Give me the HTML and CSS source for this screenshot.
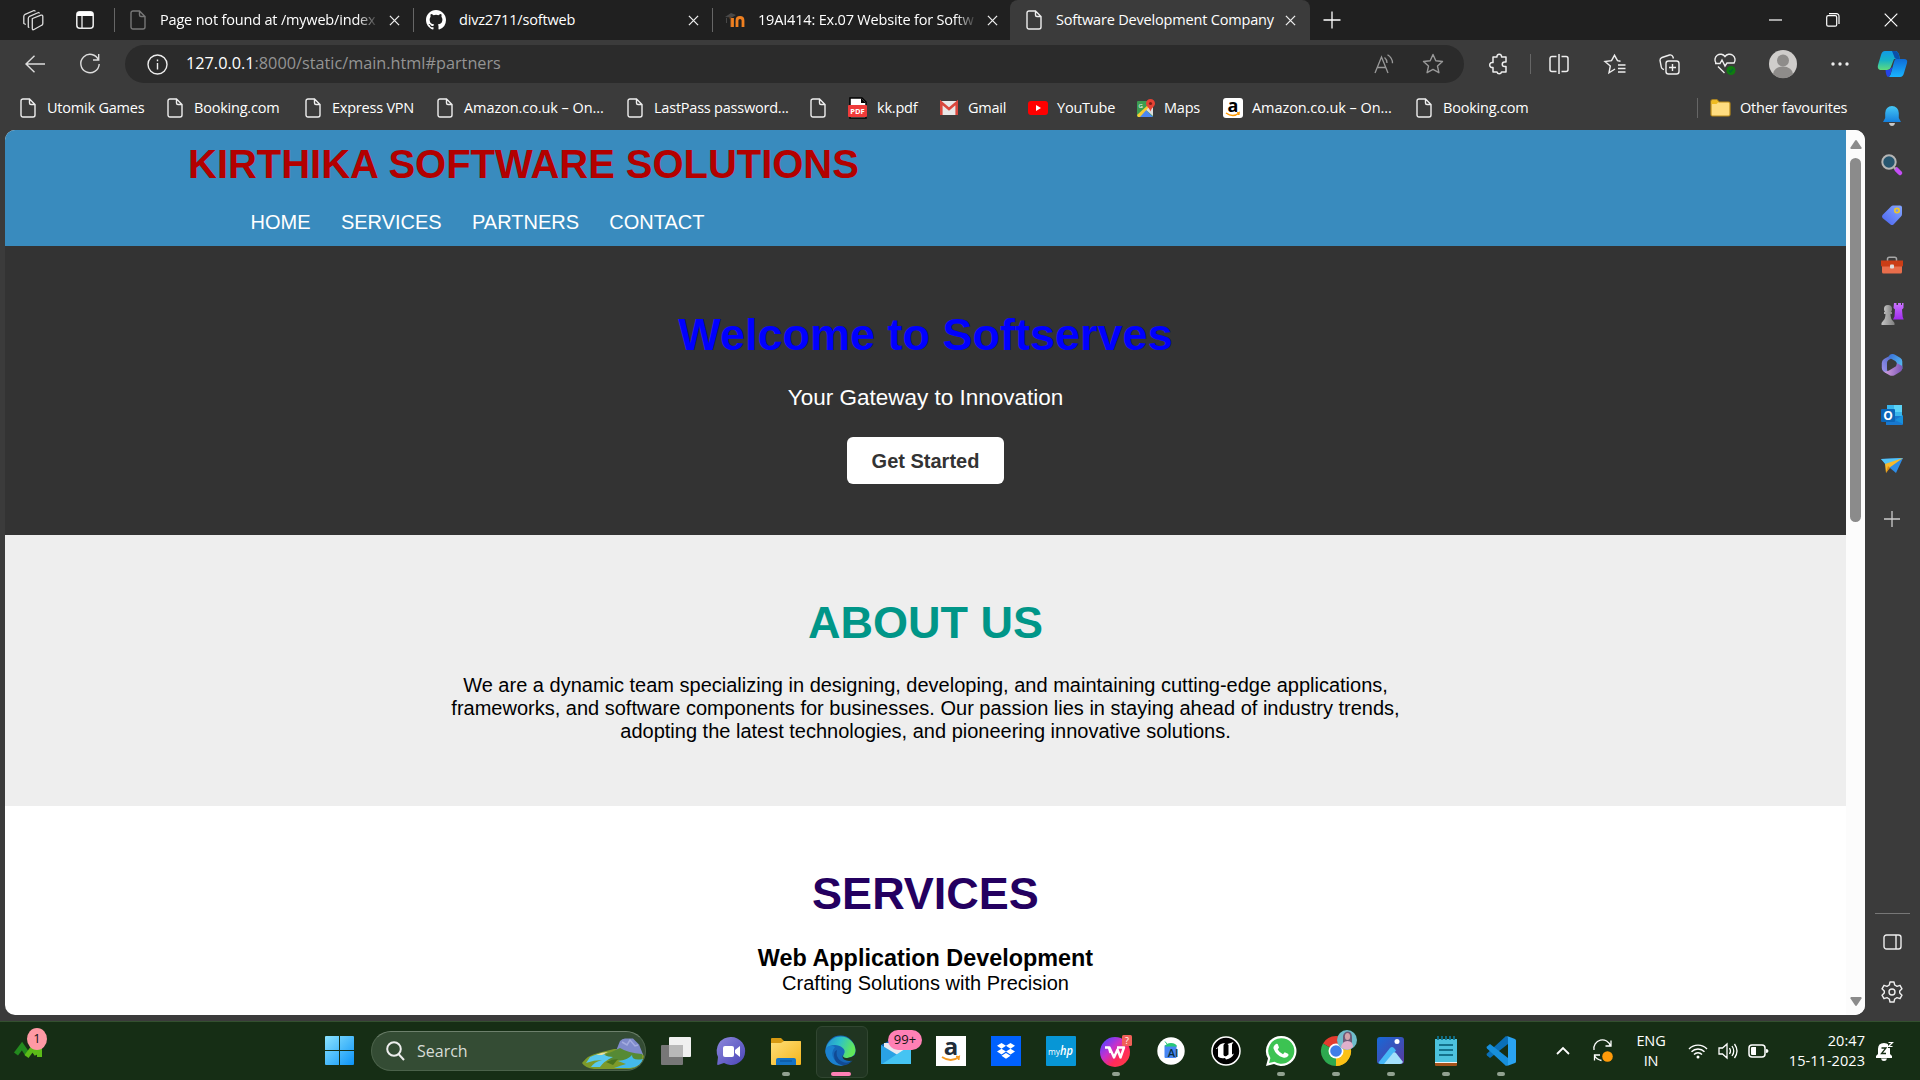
FILE: index.html
```html
<!DOCTYPE html>
<html lang="en">
<head>
<meta charset="utf-8">
<title>Software Development Company</title>
<link rel="stylesheet" href="styles.css">
</head>
<body>
<svg class="defs" width="0" height="0">
  <defs>
    <symbol id="doc" viewBox="0 0 16 20"><path d="M3 1h6.500L15 6.500V17a2 2 0 0 1-2 2H3a2 2 0 0 1-2-2V3a2 2 0 0 1 2-2zM9.500 1v4a1.500 1.500 0 0 0 1.500 1.500h4" fill="none" stroke="currentColor" stroke-width="1.400"/></symbol>
    <symbol id="x" viewBox="0 0 12 12"><path d="M1 1l10 10M11 1L1 11" fill="none" stroke="currentColor" stroke-width="1.400"/></symbol>
    <linearGradient id="win" x1="0" y1="0" x2="1" y2="1"><stop offset="0" stop-color="#8be3ff"/><stop offset="1" stop-color="#0c94f7"/></linearGradient>
    <linearGradient id="cyan" x1="0" y1="0" x2="0" y2="1"><stop offset="0" stop-color="#45c7f5"/><stop offset="1" stop-color="#1580dd"/></linearGradient>
    <linearGradient id="edgeA" x1="0" y1="0" x2="1" y2="0.300"><stop offset="0" stop-color="#2389d8"/><stop offset=".5" stop-color="#2ec2c8"/><stop offset="1" stop-color="#62e85a"/></linearGradient>
    <linearGradient id="cop1" x1="0" y1="0" x2="0" y2="1"><stop offset="0" stop-color="#109be8"/><stop offset=".5" stop-color="#18b3c4"/><stop offset="1" stop-color="#60dc7c"/></linearGradient>
    <linearGradient id="cop2" x1="0" y1="0" x2="0" y2="1"><stop offset="0" stop-color="#0f6bd6"/><stop offset="1" stop-color="#19b4ff"/></linearGradient>
    <linearGradient id="tag" x1="0" y1="1" x2="1" y2="0"><stop offset="0" stop-color="#4a63ee"/><stop offset="1" stop-color="#84a6ff"/></linearGradient>
    <linearGradient id="pawn" x1="0" y1="0" x2="1" y2="0"><stop offset="0" stop-color="#c4c4c4"/><stop offset="1" stop-color="#808080"/></linearGradient>
    <linearGradient id="rook" x1="0" y1="0" x2="0" y2="1"><stop offset="0" stop-color="#c974ff"/><stop offset="1" stop-color="#a02bee"/></linearGradient>
    <linearGradient id="fold" x1="0" y1="0" x2="1" y2="1"><stop offset="0" stop-color="#ffdf78"/><stop offset="1" stop-color="#f5b51c"/></linearGradient>
    <linearGradient id="wps" x1="0" y1="0" x2="1" y2="1"><stop offset="0.100" stop-color="#5a42ff"/><stop offset=".4" stop-color="#c730cc"/><stop offset=".65" stop-color="#ff2a5b"/><stop offset="1" stop-color="#ff4040"/></linearGradient>
    <linearGradient id="photo" x1="0" y1="0" x2="1" y2="1"><stop offset="0" stop-color="#1769d8"/><stop offset="1" stop-color="#5a3a9c"/></linearGradient>
    <linearGradient id="chat" x1="0" y1="0" x2="1" y2="1"><stop offset="0" stop-color="#8d88dc"/><stop offset="1" stop-color="#4a45b8"/></linearGradient>
    <linearGradient id="m1" x1="1" y1="0" x2="0" y2="1"><stop offset="0" stop-color="#3b62c8"/><stop offset="1" stop-color="#a795ec"/></linearGradient>
    <linearGradient id="m2" x1="0" y1="0" x2="1" y2="1"><stop offset="0" stop-color="#3a6fd8"/><stop offset="1" stop-color="#59c6f5"/></linearGradient>
    <linearGradient id="m3" x1="0" y1="0" x2="1" y2="0"><stop offset="0" stop-color="#d9a5e0"/><stop offset="1" stop-color="#7a55b8"/></linearGradient>
  </defs>
</svg>

<div class="screen">
<header class="tabstrip">
  <div class="tab-tools">
    <svg width="22" height="22" viewBox="0 0 22 22" fill="none" stroke="#ddd" stroke-width="1.300" stroke-linejoin="round"><path d="M10.500 9.500l8.500-3.300q1.800-.6 1.800 1.200v7q0 1.300-1.200 1.900L12 20.500q-1.700.8-1.700-1V9.700z"/><path d="M7.300 18.500l-1-.4V9.500q0-1.500 1.300-2.200L16.500 3.500l1.200.7M3.800 15.500l-2-1V7.500q0-1.500 1.300-2.200L12 1.500l1.500.8"/></svg>
    <svg width="18" height="18" viewBox="0 0 18 18"><rect x=".8" y=".8" width="16.400" height="16.400" rx="3" fill="none" stroke="#eee" stroke-width="1.500"/><path d="M1 5V3q0-2 2-2h12q2 0 2 2v2z" fill="#fff"/><path d="M6 5v12" stroke="#eee" stroke-width="1.300"/></svg>
  </div>
  <div class="tab t1"><svg class="doc dim"><use href="#doc"/></svg><span class="tt fade">Page not found at /myweb/index</span><svg class="x"><use href="#x"/></svg></div>
  <div class="tab t2"><svg width="20" height="20" viewBox="0 0 16 16"><path fill="#fff" d="M8 0C3.580 0 0 3.580 0 8c0 3.540 2.290 6.530 5.470 7.590.4.070.55-.17.55-.38 0-.19-.01-.82-.01-1.490-2.010.37-2.530-.49-2.690-.94-.09-.23-.48-.94-.82-1.130-.28-.15-.68-.52-.01-.53.63-.01 1.080.58 1.230.82.72 1.210 1.870.87 2.330.66.070-.52.28-.87.51-1.070-1.780-.2-3.640-.89-3.640-3.950 0-.87.31-1.590.82-2.150-.08-.2-.36-1.020.08-2.120 0 0 .67-.21 2.200.82a7.600 7.600 0 0 1 4 0c1.530-1.040 2.200-.82 2.200-.82.44 1.100.16 1.920.08 2.120.51.56.82 1.270.82 2.150 0 3.070-1.870 3.750-3.650 3.950.29.25.54.73.54 1.480 0 1.070-.01 1.930-.01 2.200 0 .21.15.46.55.38A8 8 0 0 0 16 8c0-4.420-3.580-8-8-8z"/></svg><span class="tt">divz2711/softweb</span><svg class="x"><use href="#x"/></svg></div>
  <div class="tab t3"><svg width="20" height="16" viewBox="0 0 20 16"><path d="M0 5L6 1l5 2-4 2.500z" fill="#484848"/><path d="M1.500 6v5" stroke="#484848"/><path d="M6 15V8q0-2.500-1.500-2.500" fill="none" stroke="#6b4526" stroke-width="2"/><path d="M7.500 15V6M12 15V8.500q0-3 3-3t3 3V15" fill="none" stroke="#f08020" stroke-width="2.800"/></svg><span class="tt fade">19AI414: Ex.07 Website for Softw</span><svg class="x"><use href="#x"/></svg></div>
  <div class="tab active"><svg class="doc"><use href="#doc"/></svg><span class="tt">Software Development Company</span><svg class="x"><use href="#x"/></svg></div>
  <svg class="newtab" width="18" height="18" viewBox="0 0 18 18"><path d="M9 .5v17M.5 9h17" stroke="#fff" stroke-width="1.300"/></svg>
  <div class="winbtns">
    <svg width="14" height="14" viewBox="0 0 14 14"><path d="M1 7h13" stroke="#fff" stroke-width="1.200"/></svg>
    <svg width="14" height="14" viewBox="0 0 14 14" fill="none" stroke="#fff" stroke-width="1.200"><rect x=".7" y="2.700" width="10" height="10.500" rx="1.500"/><path d="M3 .7h7.500a2.500 2.500 0 0 1 2.500 2.500V11"/></svg>
    <svg width="14" height="14" viewBox="0 0 14 14"><path d="M.7.7l12.600 12.600M13.300.7L.7 13.300" stroke="#fff" stroke-width="1.200"/></svg>
  </div>
</header>

<div class="toolbar">
  <svg class="back" width="20" height="18" viewBox="0 0 20 18" fill="none" stroke="#ddd" stroke-width="1.400"><path d="M20 9H1M9.500.7L1 9l8.500 8.300"/></svg>
  <svg class="reload" width="20" height="20" viewBox="0 0 20 20" fill="none" stroke="#ddd" stroke-width="1.400"><path d="M18.500 6A9.200 9.200 0 1 0 19.200 10M18.700 0v6H13"/></svg>
  <div class="address">
    <svg width="21" height="21" viewBox="0 0 21 21" fill="none" stroke="#eee" stroke-width="1.400"><circle cx="10.500" cy="10.500" r="9.500"/><path d="M10.500 9v6.500M10.500 5.500v1.800"/></svg>
    <span class="url"><b>127.0.0.1</b>:8000/static/main.html#partners</span>
    <div class="addr-icons">
      <svg width="20" height="20" viewBox="0 0 20 20" fill="none" stroke="#999" stroke-width="1.300"><path d="M1 19L7.500 3 14 19M3.500 13.500h8M10.500 3.500q2.500 2 2.500 5.500M13.500.8q5 3 5 8.500"/></svg>
      <svg width="22" height="22" viewBox="0 0 22 22"><path d="M11 1.500l2.800 6.200 6.700.8-5 4.600 1.400 6.600L11 16.400l-5.900 3.300 1.400-6.600-5-4.600 6.700-.8z" fill="none" stroke="#999" stroke-width="1.400" stroke-linejoin="round"/></svg>
    </div>
  </div>
  <div class="actions">
    <svg class="a1" width="22" height="22" viewBox="0 0 22 22"><path d="M5 4h4a2.300 2.300 0 1 1 4.500 0H18v5h-1.500a2 2 0 0 0 0 4.500H18V19h-4.500a2.300 2.300 0 0 1-4.500 0H5v-4.500a2.600 2.600 0 1 1 0-5z" fill="none" stroke="#eee" stroke-width="1.500" stroke-linejoin="round"/></svg>
    <i class="vsep a2"></i>
    <svg class="a3" width="20" height="20" viewBox="0 0 20 20" fill="none" stroke="#eee" stroke-width="1.500"><path d="M7.500 2.500H3a2 2 0 0 0-2 2v11a2 2 0 0 0 2 2h4.500M12.500 2.500H17a2 2 0 0 1 2 2v11a2 2 0 0 1-2 2h-4.500M10 0v20"/></svg>
    <svg class="a4" width="22" height="20" viewBox="0 0 22 20" fill="none" stroke="#eee" stroke-width="1.400"><path d="M11 14.500l-6 3.800 1.300-6.800L1 7l6.500-.8L10.500.8l3 5.400 3 .5M14 10.500h7.500M14 14h7.500M14 17.500h7.500" transform="translate(0 .5)"/></svg>
    <svg class="a5" width="21" height="21" viewBox="0 0 21 21" fill="none" stroke="#eee" stroke-width="1.400"><rect x="7" y="7" width="13" height="13" rx="2.500"/><path d="M13.500 10v7M10 13.500h7M5 15.500l-1-.4a3 3 0 0 1-1.700-2L1 6.500a3 3 0 0 1 2-3L10.500 1a3 3 0 0 1 3.500 2l.4 1.500"/></svg>
    <svg class="a6" width="22" height="22" viewBox="0 0 22 22" fill="none" stroke="#eee" stroke-width="1.400"><path d="M2 10a5 5 0 0 1 9-6.500A5 5 0 0 1 20 10M1 10.500h5l2-3.500 3 6 2-3h7.500M4 13.500L10.500 20"/><circle cx="17" cy="17.500" r="4.500" fill="#107c10" stroke="none"/><path d="M15 17.500l1.500 1.500 2.500-3" stroke="#063"/></svg>
    <svg class="a7" width="28" height="28" viewBox="0 0 28 28"><circle cx="14" cy="14" r="14" fill="#cfcdcb"/><circle cx="14" cy="10.500" r="6" fill="#8e8c8a"/><path d="M4 24a10 7.500 0 0 1 20 0 14 14 0 0 1-20 0z" fill="#8e8c8a"/></svg>
    <svg class="a8" width="18" height="4" viewBox="0 0 18 4" fill="#eee"><circle cx="2" cy="2" r="1.700"/><circle cx="9" cy="2" r="1.700"/><circle cx="16" cy="2" r="1.700"/></svg>
    <svg class="a9" width="31" height="28" viewBox="0 0 31 28"><path d="M8 1h10q3 0 4 4l1 4h-6l-3.500 9q-1 2-3.500 2H3q-3-1-2-5L4 5q1-4 4-4z" fill="url(#cop1)"/><path d="M15 1h3q3 0 4 4l1 4h-3q-2.500 0-3-3z" fill="#0b4fa8"/><path d="M19 9h8q4 0 3 4l-3 10q-1 4-4 4H11q2 0 3-4l3-11q.6-3 2-3z" fill="url(#cop2)"/><path d="M8.500 20h2q2.500 0 3.500-2l1.500-1-2 7q-1 3-2.500 3-2-1-2.500-7z" fill="#2444e8"/></svg>
  </div>
</div>

<nav class="bookmarks">
  <div class="bm b1"><svg class="doc"><use href="#doc"/></svg><span>Utomik Games</span></div>
  <div class="bm b2"><svg class="doc"><use href="#doc"/></svg><span>Booking.com</span></div>
  <div class="bm b3"><svg class="doc"><use href="#doc"/></svg><span>Express VPN</span></div>
  <div class="bm b4"><svg class="doc"><use href="#doc"/></svg><span class="wide">Amazon.co.uk – On...</span></div>
  <div class="bm b5"><svg class="doc"><use href="#doc"/></svg><span>LastPass password...</span></div>
  <div class="bm b6"><svg class="doc"><use href="#doc"/></svg></div>
  <div class="bm b7"><svg width="20" height="20" viewBox="0 0 20 20"><path d="M2 0h12l4 4v16H2z" fill="#fff" stroke="#000" stroke-width="1.500"/><path d="M13 0l5 5h-5z" fill="#000"/><rect y="7" width="19" height="12" rx="1" fill="#f03a3a"/><text x="9.500" y="15.500" font-size="7.500" font-weight="bold" fill="#fff" text-anchor="middle">PDF</text></svg><span>kk.pdf</span></div>
  <div class="bm b8"><svg width="18" height="14" viewBox="0 0 18 14"><rect width="18" height="14" rx="1" fill="#e8e8e8"/><path d="M1.300 14V1.500L9 8l7.700-6.500V14" fill="none" stroke="#d9473d" stroke-width="2.600"/></svg><span>Gmail</span></div>
  <div class="bm b9"><svg width="20" height="14" viewBox="0 0 20 14"><rect width="20" height="14" rx="3" fill="#f00"/><path d="M8 4l5 3-5 3z" fill="#fff"/></svg><span>YouTube</span></div>
  <div class="bm b10"><svg width="18" height="18" viewBox="0 0 18 18"><rect y="2" width="16" height="16" rx="1" fill="#3c9c50"/><path d="M1 18l7-8 8 8z" fill="#4b87f3"/><path d="M8 10l5-5 3 3v9z" fill="#dedede"/><path d="M0 16L11 6l1 2L3 18H1z" fill="#f6cc35"/><path d="M9 4.500a4.500 4.500 0 0 1 9 0c0 3-3.500 4-4.500 8-1-4-4.500-5-4.500-8z" fill="#e64234"/><circle cx="13.500" cy="4.500" r="1.600" fill="#7c1e18"/><text x="1.500" y="8.500" font-size="6" fill="#fff">G</text></svg><span>Maps</span></div>
  <div class="bm b11"><svg width="20" height="20" viewBox="0 0 20 20"><rect width="20" height="20" rx="3" fill="#fff"/><text x="10" y="13.500" font-size="18" font-weight="bold" text-anchor="middle">a</text><path d="M3 15q7 5 13 0l-.2 2M16 15l-2-.3" fill="none" stroke="#f90" stroke-width="1.500"/></svg><span class="wide">Amazon.co.uk – On...</span></div>
  <div class="bm b12"><svg class="doc"><use href="#doc"/></svg><span>Booking.com</span></div>
  <i class="vsep"></i>
  <div class="bm other"><svg width="21" height="18" viewBox="0 0 21 18"><path d="M1 4.500V2.500q0-1.700 1.500-1.700H7l2 2.200h9.500q1.500 0 1.500 1.500v11q0 1.500-1.500 1.500h-16Q1 17 1 15.500z" fill="#ffdd80" stroke="#b98a18" stroke-width="1.200"/><path d="M1.500 5V2.700q0-1.400 1.300-1.400H6.700L8.500 3 6.500 5z" fill="#f0bb20"/></svg><span>Other favourites</span></div>
</nav>

<div class="body">
  <div class="viewport">
    <main class="page">
      <div class="site-header"><div class="container">
        <h1>KIRTHIKA SOFTWARE SOLUTIONS</h1>
        <ul><li>HOME</li><li>SERVICES</li><li>PARTNERS</li><li>CONTACT</li></ul>
      </div></div>
      <section class="hero"><h2>Welcome to Softserves</h2><p>Your Gateway to Innovation</p><a class="btn">Get Started</a></section>
      <section class="about"><h2>ABOUT US</h2><p>We are a dynamic team specializing in designing, developing, and maintaining cutting-edge applications, frameworks, and software components for businesses. Our passion lies in staying ahead of industry trends, adopting the latest technologies, and pioneering innovative solutions.</p></section>
      <section class="services"><h2>SERVICES</h2><h3>Web Application Development</h3><p>Crafting Solutions with Precision</p></section>
    </main>
    <div class="scroll">
      <svg width="12" height="9" viewBox="0 0 12 9"><path d="M6 0q.5 0 1 .7L11.500 7.500q.5 1.500-.7 1.500H1.200Q0 9 .5 7.500L5 .7Q5.500 0 6 0z" fill="#8b8b8b"/></svg>
      <div class="thumb"></div>
      <svg class="down" width="12" height="9" viewBox="0 0 12 9"><path d="M6 9q-.5 0-1-.7L.5 1.500Q0 0 1.200 0h9.600q1.200 0 .7 1.500L7 8.300Q6.500 9 6 9z" fill="#8b8b8b"/></svg>
    </div>
  </div>
  <aside class="sidebar">
    <svg class="s1" width="20" height="22" viewBox="0 0 20 22"><path d="M7 18h6q-.5 3-3 3t-3-3z" fill="#c8c8c8"/><path d="M10 1a6.800 6.800 0 0 1 6.800 7v5l2.200 4H1l2.200-4V8A6.800 6.800 0 0 1 10 1z" fill="url(#cyan)"/></svg>
    <svg class="s2" width="22" height="22" viewBox="0 0 22 22"><path d="M15.500 15.500l3.500 3.500" stroke="#c44df5" stroke-width="4.500" stroke-linecap="round"/><circle cx="8" cy="8" r="6.700" fill="#27566f" stroke="#b5b5b5" stroke-width="2"/><path d="M12.500 13l2 2" stroke="#aaa" stroke-width="2"/></svg>
    <svg class="s3" width="22" height="22" viewBox="0 0 22 22"><path d="M12 1.500h7q2 0 2 2V10q0 1.500-1 2.500l-7.500 8q-1.500 1-3 0L1.500 14q-1-1.500 0-3L10 2.500q1-1 2-1z" fill="url(#tag)"/><circle cx="16" cy="6.500" r="2.200" fill="none" stroke="#ecc52a" stroke-width="1.700"/></svg>
    <svg class="s4" width="24" height="20" viewBox="0 0 24 20"><path d="M7.500 6V4q0-1.800 1.800-1.800h5.400q1.800 0 1.800 1.800v2" fill="none" stroke="#a7a7a7" stroke-width="1.500"/><path d="M2 9h20v8q0 1.500-1.500 1.500h-17Q2 18.500 2 17z" fill="#e86d4b"/><path d="M1 5.500h22v5q0 1-1 1H2q-1 0-1-1z" fill="#cb3d16"/><rect x="10" y="9.500" width="4" height="4" rx="1" fill="#ddd"/></svg>
    <svg class="s5" width="24" height="24" viewBox="0 0 24 24"><path d="M14 1h2.500v2H18V1h3v2h1V1h1.500v5l-1.500 1.500.7 7.500 1 2.500H13l1.500-3 .5-7L13.500 6z" fill="url(#rook)"/><circle cx="8" cy="7" r="4" fill="url(#pawn)"/><path d="M4 10h8v2h-1.500q0 5 2.500 7l1.500 2v2H1.500v-2L3 19q2.500-2 2.500-7H4z" fill="url(#pawn)"/></svg>
    <svg class="s6" width="22" height="22" viewBox="0 0 22 22"><path d="M12 0L3 5Q.8 6.300.8 9v5q0 2.500 2 3.700L7 20l-1-5V9q0-2 1.500-3L13 3z" fill="url(#m1)"/><path d="M8.500 1q3-1.800 6 0l5 3q1.800 1.200 1.800 3.500V15l-5.500-3.500V9.500q0-1.500-1.500-2.500L8 3.500z" fill="url(#m2)"/><path d="M21.300 12v2.500q0 2-2 3.200l-5.800 3.500q-2.500 1.300-5 0l-6-3.700q3 .5 5.500-1l7-4.200 1.200-3z" fill="url(#m3)"/></svg>
    <svg class="s7" width="22" height="22" viewBox="0 0 22 22"><path d="M6 1h14q1 0 1 1v18q0 1-1 1H6z" fill="#38b5ec"/><path d="M13 1h8v7h-8z" fill="#5bd3f7"/><path d="M5 12h17v8q0 1-1 1H5z" fill="#1878cf"/><path d="M22 11v9l-8-4z" fill="#1690dc"/><rect y="5" width="14" height="13" rx="1" fill="#0b66b8"/><text x="7" y="15.500" font-size="12" font-weight="bold" fill="#fff" text-anchor="middle">O</text></svg>
    <svg class="s8" width="22" height="18" viewBox="0 0 22 18"><path d="M0 3L22 2 15 17 9 12z" fill="#2e8de8"/><path d="M0 3L22 2 5 9z" fill="#54c4f8"/><path d="M22 2L4 8l1 9 3-5z" fill="#f7ba2c"/><path d="M5 17l4-5-2-2z" fill="#d98a15"/></svg>
    <svg class="s9" width="16" height="16" viewBox="0 0 16 16"><path d="M8 0v16M0 8h16" stroke="#ccc" stroke-width="1.300"/></svg>
    <i class="hsep"></i>
    <svg class="s10" width="19" height="16" viewBox="0 0 19 16" fill="none" stroke="#eee" stroke-width="1.400"><rect x="1" y="1" width="17" height="14" rx="2.500"/><path d="M13 1v14"/></svg>
    <svg class="s11" width="22" height="22" viewBox="0 0 22 22" fill="none" stroke="#eee" stroke-width="1.400" stroke-linejoin="round"><path d="M9 1h4l.7 3 2.300 1.300 3-1 2 3.500L18.700 10v2l2.300 2.200-2 3.500-3-1-2.300 1.300L13 21H9l-.7-3L6 16.700l-3 1-2-3.500L3.300 12v-2L1 7.800l2-3.500 3 1L8.300 4z"/><circle cx="11" cy="11" r="3"/></svg>
  </aside>
</div>

<footer class="taskbar">
  <div class="widget"><svg width="30" height="22" viewBox="0 0 30 22"><path d="M2 14l6-8 6 9" fill="none" stroke="#238a1e" stroke-width="5"/><path d="M12.500 16.500l6-8 3 4 4-2V17" fill="none" stroke="#5cbc18" stroke-width="5"/></svg><span class="count">1</span></div>
  <svg class="start" width="29" height="29" viewBox="0 0 29 29" fill="url(#win)"><path d="M1 0h13v14H0V1q0-1 1-1zM15 0h13q1 0 1 1v13H15zM0 15h14v14H1q-1 0-1-1zM15 15h14v13q0 1-1 1H15z"/></svg>
  <div class="search"><svg width="19" height="20" viewBox="0 0 19 20" fill="none" stroke="#eee" stroke-width="2"><circle cx="8" cy="8" r="6.800"/><path d="M12.500 13l5.500 6"/></svg><span>Search</span>
    <svg class="scene" width="62" height="32" viewBox="0 0 62 32"><path d="M0 25Q6 17 16 15L32 11h22q8 4 8 8-2 12-15 12H12Q3 30 0 25z" fill="#7d9a2a"/><path d="M34 13l4-10q2-2.500 5-2.500h8l6 6 4 10-10 3H34z" fill="#7f8bcb"/><path d="M40 4l5 3 3-5 5 6 3-1" fill="none" stroke="#a3abdf" stroke-width="1.500"/><path d="M24 16q6-2 14-6 8 5 22 6v6H24z" fill="#568a35"/><path d="M8 19q9-4 15-4-3 3 8 4-9 4-13 10H9q3-5 11-7-8 0-16 3z" fill="#58c8ee"/><path d="M36 23q10-1 14-6 0 6 11 4-2 8-13 9H32q8-3 12-4z" fill="#44b9ea"/><path d="M14 17q6-3 12-3l-6 3z" fill="#f0e09a"/><path d="M24 24q6-3 12-3l-5 6z" fill="#49751f"/></svg>
  </div>
  <div class="apps">
    <div class="app"><svg width="30" height="30" viewBox="0 0 30 30"><rect x="8" y="1" width="22" height="20" rx="1" fill="#f0f0f0"/><rect y="9" width="22" height="20" rx="1" fill="#777" /><rect x="8" y="9" width="14" height="12" fill="#b8b8b8"/></svg></div>
    <div class="app"><svg width="30" height="30" viewBox="0 0 30 30"><path d="M15 1a14 14 0 1 1-7 26l-6 2q-1 0-.8-1L2 21A14 14 0 0 1 15 1z" fill="url(#chat)"/><rect x="7" y="10" width="11" height="11" rx="2" fill="#fff"/><path d="M19 14l5-4v11l-5-4z" fill="#fff"/></svg></div>
    <div class="app run"><svg width="30" height="28" viewBox="0 0 30 28"><path d="M0 2q0-1 1-1h9l3 3h16q1 0 1 1v6H0z" fill="#d79a12"/><path d="M0 6h10l3-2h16q1 0 1 1v22q0 1-1 1H1q-1 0-1-1z" fill="url(#fold)"/><path d="M5 28v-5q0-2 2-2h16q2 0 2 2v5z" fill="#1373c6"/><path d="M9 24h12" stroke="#0b4f93"/></svg></div>
    <div class="app run on"><svg width="31" height="31" viewBox="0 0 31 31"><circle cx="15.500" cy="15.500" r="15" fill="#1667b8"/><path d="M.8 14A15 15 0 0 1 30.500 15c0 6-5 8-9 8s-4-2-2.500-4c3-5-4-9-9-9Q4 10 .8 14z" fill="url(#edgeA)"/><path d="M10 12q-5 6-1 12t10 6.500Q8 32 3 24-1 18 1 13q4-4 9-1z" fill="#1b81cf"/><path d="M12 15q-2 7 4 11t12-1q-4 5-10 5.500Q9 29 9 20q0-4 3-5z" fill="#114a94"/><path d="M19 19q-3 3 2 4 4 .6 9-3l2 4-3 1q-6 2-10-.500-3-3 0-5.500z" fill="#203521"/></svg></div>
    <div class="app"><svg width="30" height="27" viewBox="0 0 30 27"><path d="M0 8L15 0l15 8v19H0z" fill="#0e63b0"/><path d="M3 6h24v8L15 20 3 13z" fill="#e9e9f0"/><path d="M0 8l20 12-9 7H0z" fill="#2aa2e4"/><path d="M30 8v19H1z" fill="#45c4f3"/></svg><span class="badge">99+</span></div>
    <div class="app"><svg width="30" height="30" viewBox="0 0 30 30"><rect width="30" height="30" fill="#fff"/><text x="15" y="19" font-size="24" font-weight="bold" fill="#222d3a" text-anchor="middle">a</text><path d="M6 21q9 6 17 0l-.4 3M23 21l-3-.3" fill="none" stroke="#f59a20" stroke-width="1.800"/></svg></div>
    <div class="app"><svg width="30" height="30" viewBox="0 0 30 30"><rect width="30" height="30" fill="#0061fe"/><path d="M10.500 7l4.500 2.800-4.500 2.900L6 9.800zM19.500 7L24 9.800l-4.500 2.900L15 9.800zM10.500 12.700l4.500 2.800-4.500 2.900L6 15.500zM19.500 12.700l4.500 2.800-4.500 2.900-4.500-2.900zM15 17l4.500 2.800L15 22.700l-4.500-2.900z" fill="#fff"/></svg></div>
    <div class="app"><svg width="30" height="30" viewBox="0 0 30 30"><rect width="30" height="30" rx="1" fill="#0796d6"/><text x="2" y="18.500" font-size="9.500" fill="#fff" textLength="12" lengthAdjust="spacingAndGlyphs">my</text><text x="14" y="19" font-size="13" font-style="italic" font-weight="600" fill="#fff" textLength="13" lengthAdjust="spacingAndGlyphs">hp</text></svg></div>
    <div class="app run"><svg width="32" height="32" viewBox="0 0 32 32"><circle cx="15" cy="17" r="15" fill="url(#wps)"/><path d="M5 12.500h4.500l4.500 10 3.500-8 3 8L24 12.500h-7M9 13l1.500 5" fill="none" stroke="#fff" stroke-width="2.400" stroke-linejoin="round"/><rect x="22" width="10" height="11" rx="1.500" fill="#f06057"/><text x="27" y="9" font-size="9" fill="#fff" text-anchor="middle">?</text></svg></div>
    <div class="app"><svg width="28" height="28" viewBox="0 0 28 28"><circle cx="14" cy="14" r="13.700" fill="#fff"/><rect x="7.500" y="8" width="12" height="13" rx="1" fill="#4786f4"/><path d="M8 9.500q1-3.500 6-3.500t6 3.500z" fill="#28c878"/><path d="M8 4.500l2 2.500" stroke="#28c878"/><text x="16" y="20" font-size="11" font-weight="600" fill="#083042" text-anchor="middle">AI</text></svg></div>
    <div class="app"><svg width="30" height="30" viewBox="0 0 30 30"><circle cx="15" cy="15" r="14" fill="#000" stroke="#fff" stroke-width="1.500"/><path d="M6 13q2-6 8-6l-1.500 2v10q1 2 3 1l2-1.500V9l-1-1 6-2-1.500 2.500v10l2-1q-2 5-8 6l-1-1.500q-5 1-7-1.500V12q-1-1-2 1z" fill="#fff"/></svg></div>
    <div class="app run"><svg width="32" height="32" viewBox="0 0 32 32"><path d="M16 1a15 15 0 1 1-7 28l-8 2 2-7.500A15 15 0 0 1 16 1z" fill="#fff"/><path d="M16 3.200a12.800 12.800 0 1 1-6.500 23.500L4 28l1.400-5A12.800 12.800 0 0 1 16 3.200z" fill="#3cc352"/><path d="M11 9q1.500-.8 2 .8l1 2.700-1.300 2q2 3.500 5.300 4.800l1.700-2 3.300 1.500q1 .7.200 2.200-2 2.500-5.200 1.500-7-2-9.500-9Q8 11 11 9z" fill="#fff"/></svg></div>
    <div class="app run chrome"><svg width="30" height="30" viewBox="0 0 30 30"><path d="M15 15L2 7.500A15 15 0 0 1 28 7.500z" fill="#e33b2e"/><path d="M15 15L28 7.500A15 15 0 0 1 15 30z" fill="#fbc116"/><path d="M15 15v15A15 15 0 0 1 2 7.500z" fill="#2da94f"/><path d="M15 8.300h13.300A15 15 0 0 1 15 30l5.800-11.600z" fill="#fbc116"/><circle cx="15" cy="15" r="7.500" fill="#fff"/><circle cx="15" cy="15" r="5.800" fill="#3f7ee8"/></svg><svg class="face" width="20" height="20" viewBox="0 0 20 20"><circle cx="10" cy="10" r="10" fill="#6fbccb"/><path d="M6 17V6q1-4.500 5-4.500t4 6v10q-5 2-9-.500z" fill="#6d5a78"/><ellipse cx="10.500" cy="6.500" rx="2.600" ry="3.600" fill="#d3a3aa"/><path d="M4 17.500q1-6.500 6.500-6.500t5.500 6q-5 5-12 .5z" fill="#dfb0cc"/></svg></div>
    <div class="app run"><svg width="27" height="27" viewBox="0 0 27 27"><rect width="27" height="27" rx="3" fill="url(#photo)"/><circle cx="20" cy="4.500" r="2.500" fill="#fff"/><path d="M1.500 25.500L13 11q2-2 4 0l2 2.500L8 27H4q-2 0-2.500-1.500z" fill="#45b7f6"/><path d="M7 27l9-11q1.500-1.500 3 0l7 9q-1 2-3 2z" fill="#a3e0fb"/></svg></div>
    <div class="app run"><svg width="24" height="30" viewBox="0 0 24 30"><rect x="1" y="25" width="22" height="5" rx="1" fill="#a5531a"/><rect x="1" y="24" width="22" height="3" fill="#f2f2f2"/><path d="M1 3h22v23H1z" fill="#4cc2dd"/><path d="M4 0v4M8 0v4M12 0v4M16 0v4M20 0v4" stroke="#0f7390" stroke-width="1.800"/><path d="M5 9h14M5 14h14M5 19h14" stroke="#14728c" stroke-width="1.800"/></svg></div>
    <div class="app run"><svg width="30" height="30" viewBox="0 0 30 30"><path d="M22 8L4 22l-3-2.500q-1-1 0-2L20 0l2 1z" fill="#0a6fb8"/><path d="M22 22L4 8l-3 2.500q-1 1 0 2L20 30l2-1z" fill="#178fdc"/><path d="M21 0l8 3q1 .5 1 1.500v21q0 1-1 1.500l-8 3q1-1 1-2.500v-25Q22 1 21 0z" fill="#2aa3f2"/></svg></div>
  </div>
  <div class="tray">
    <svg class="chev" width="14" height="9" viewBox="0 0 14 9"><path d="M1 8l6-6 6 6" fill="none" stroke="#fff" stroke-width="1.800"/></svg>
    <svg class="sync" width="22" height="22" viewBox="0 0 22 22" fill="none" stroke="#fff" stroke-width="1.300"><path d="M2 10A8.500 8.500 0 0 1 18.500 6M19 .5V6h-5.500M2.500 20.500V15H8M2.500 15.500q2 4 7 5"/><circle cx="15.500" cy="16.500" r="5.300" fill="#ff9b0a" stroke="none"/></svg>
    <div class="lang">ENG<br>IN</div>
    <svg class="wifi" width="20" height="16" viewBox="0 0 20 16" fill="none" stroke="#fff" stroke-width="1.400"><path d="M1 6a12.500 12.500 0 0 1 18 0M3.500 8.800a9 9 0 0 1 13 0M6 11.500a5.500 5.500 0 0 1 8 0"/><circle cx="10" cy="14" r="1.500" fill="#fff" stroke="none"/></svg>
    <svg class="vol" width="20" height="18" viewBox="0 0 20 18" fill="none" stroke="#fff" stroke-width="1.300"><path d="M1 6h3.500L9 2v14l-4.500-4H1zM11.500 6q2 3 0 6M14 4q3.500 5 0 10M16.500 2q5 7 0 14"/></svg>
    <svg class="bat" width="21" height="14" viewBox="0 0 21 14"><rect x="1" y="1" width="16" height="12" rx="3" fill="none" stroke="#fff" stroke-width="1.500"/><path d="M3 4q0-1 1-1h4v8H4q-1 0-1-1zM18 5q2.500 0 2.500 2T18 9z" fill="#fff"/></svg>
    <div class="clock">20:47<br>15-11-2023</div>
    <svg class="bell" width="18" height="20" viewBox="0 0 18 20"><path d="M8 2q6 0 6 6v5l2 2v2H0v-2l2-2V8q0-6 6-6zM5 17.500h6q-.5 2.500-3 2.500t-3-2.500z" fill="#fff"/><path d="M5.500 7h4.500l-4.500 5.500H10" fill="none" stroke="#162e15" stroke-width="1.300"/><path d="M12 0h6v7h-6z" fill="#162e15"/><path d="M12.500 1.500h4l-4 4h4" fill="none" stroke="#fff" stroke-width="1.200"/></svg>
  </div>
</footer>
</div>
</body>
</html>
```
FILE: styles.css
```css
* { box-sizing: border-box; }
body { margin: 0; font-family: "Open Sans", "Noto Sans", sans-serif; color: #fff; background: #3b3b3b; overflow: hidden; }
svg { flex: none; display: block; overflow: visible; }
svg text { font-family: "Open Sans", sans-serif; letter-spacing: 0; }
.defs { position: absolute; }
.screen { width: 1920px; height: 1080px; display: grid; grid-template-rows: 40px 48px 42px 891px 59px; }
.doc { width: 16px; height: 20px; color: #eee; }
.dim { color: #777; }
.x { width: 11px; height: 11px; color: #eee; }

/* tabs */
.tabstrip { display: flex; align-items: center; background: #202020; font-size: 14.500px; letter-spacing: -0.180px; }
.tab-tools { width: 114px; padding-left: 22px; display: flex; align-items: center; gap: 32px; }
.tab { display: flex; align-items: center; height: 40px; }
.tab::before { content: ""; width: 1px; height: 24px; background: #666; margin-right: 15px; flex: none; }
.tt { white-space: nowrap; overflow: hidden; margin-left: 13px; padding-bottom: 2px; flex: none; }
.t1 { width: 299px; } .t1 .tt { width: 219px; margin-left: 14px; margin-right: 10px; }
.t2 { width: 299px; } .t2::before { margin-right: 12px; } .t2 .tt { width: 229px; }
.t3 { width: 298px; } .t3::before { margin-right: 12px; } .t3 .tt { width: 219px; margin-right: 10px; }
.fade { -webkit-mask-image: linear-gradient(90deg, #000 90%, transparent); mask-image: linear-gradient(90deg, #000 90%, transparent); }
.active { width: 300px; background: #3b3b3b; border-radius: 8px 8px 0 0; }
.active::before { background: none; }
.active .tt { width: 221px; margin-left: 14px; margin-right: 8px; }
.newtab { margin-left: 13px; }
.winbtns { margin-left: auto; margin-right: 22px; display: flex; gap: 44px; }

/* toolbar */
.toolbar { display: flex; align-items: center; }
.back { margin-left: 25px; }
.reload { margin-left: 35px; }
.address { margin-left: 25px; width: 1339px; height: 38px; border-radius: 19px; background: #2b2b2b; display: flex; align-items: center; padding: 0 20px 0 22px; }
.url { margin-left: 18px; font-size: 16.250px; color: #949494; white-space: nowrap; padding-bottom: 2px; }
.url b { color: #fff; font-weight: 400; }
.addr-icons { margin-left: auto; display: flex; align-items: center; gap: 28px; }
.actions { flex: 1; display: flex; align-items: center; }
.a1 { margin-left: 24px; } .a2 { margin-left: 20px; } .a3 { margin-left: 18px; } .a4 { margin-left: 35px; } .a5 { margin-left: 33px; }
.a6 { margin-left: 34px; } .a7 { margin-left: 33px; } .a8 { margin-left: 34px; } .a9 { margin-left: 28px; }
.vsep { width: 1px; height: 20px; background: #666; flex: none; }

/* favourites bar */
.bookmarks { display: flex; align-items: center; padding-left: 20px; font-size: 14.500px; letter-spacing: -0.220px; padding-bottom: 2px; }
.bm { display: flex; align-items: center; gap: 11px; white-space: nowrap; flex: none; }
.bm span { padding-bottom: 2px; }
.bm .wide { letter-spacing: -0.080px; }
.b1 { width: 147px; } .b2 { width: 138px; } .b3 { width: 132px; } .b4 { width: 190px; } .b5 { width: 183px; }
.b6 { width: 38px; } .b7 { width: 92px; gap: 9px; } .b8 { width: 88px; gap: 10px; } .b9 { width: 109px; gap: 9px; }
.b10 { width: 86px; gap: 9px; } .b11 { width: 193px; gap: 9px; } .b12 { width: 281px; }
.other { margin-left: 12px; gap: 9px; }

/* browser body */
.body { display: flex; }
.viewport { width: 1860px; height: 885px; margin-left: 5px; border-radius: 10px; overflow: hidden; display: flex; background: #fff; }
.page { width: 1841px; font-family: "Liberation Sans", Arial, sans-serif; font-size: 20px; line-height: 23px; color: #000; text-align: center; }
.page h1, .page h2, .page h3, .page p, .page ul { margin: 0; padding: 0; }
.site-header { height: 116px; background: #398bbe; text-align: left; }
.container { width: 80%; margin: 0 auto; padding-top: 11px; }
.page h1 { font-size: 40px; line-height: 46px; color: #b30000; letter-spacing: -0.040px; margin-left: -1px; }
.page ul { display: flex; gap: 30.300px; list-style: none; color: #fff; padding: 24px 0 0 61.500px; }
.page h2 { font-size: 45px; line-height: 52px; }
.hero { height: 289px; background: #333; color: #fff; padding-top: 63px; }
.hero h2 { color: #00f; }
.hero p { font-size: 22.500px; line-height: 28px; margin-top: 23px; }
.btn { display: inline-block; margin-top: 25px; width: 157px; height: 47px; line-height: 48px; border-radius: 6px; background: #fff; color: #333; font-weight: 700; }
.about { height: 271px; background: #eee; padding-top: 62px; }
.about h2 { color: #009688; }
.about p { width: 1000px; margin: 25px auto 0; }
.services { padding-top: 62px; }
.services h2 { color: #240060; }
.services h3 { font-size: 23.400px; line-height: 27px; margin-top: 25px; }
.services p { font-size: 20px; }
.scroll { width: 19px; background: #fcfcfc; display: flex; flex-direction: column; align-items: center; padding: 10px 0 9px; }
.thumb { width: 11px; height: 364px; margin-top: 9px; border-radius: 6px; background: #8b8b8b; }
.down { margin-top: auto; }

/* sidebar */
.sidebar { width: 54px; margin-top: -25px; display: flex; flex-direction: column; align-items: center; }
.s2 { margin-top: 27px; } .s3 { margin-top: 28px; } .s4 { margin-top: 29px; } .s5 { margin-top: 27px; }
.s6 { margin-top: 28px; } .s7 { margin-top: 28px; } .s8 { margin-top: 30px; } .s9 { margin-top: 37px; }
.hsep { width: 35px; height: 1px; background: #777; margin-top: 386px; }
.s10 { margin-top: 20px; } .s11 { margin-top: 31px; }

/* taskbar */
.taskbar { background: #162e15; border-top: 1px solid #33502f; display: flex; align-items: center; padding-bottom: 1px; }
.widget { position: relative; width: 325px; padding-left: 14px; }
.count { position: absolute; left: 27px; top: -12px; width: 20px; height: 22px; border-radius: 50%; background: #ff99a4; color: #111; font-size: 13px; line-height: 21px; text-align: center; }
.search { margin-left: 17px; width: 275px; height: 40px; border: 1px solid #4b624a; border-top-color: #6d806c; border-radius: 20px; background: #344c34; display: flex; align-items: center; padding-left: 14px; overflow: hidden; font-size: 16px; color: #d7ddd7; }
.search span { margin-left: 12px; }
.scene { margin: 6px 1px 0 auto; }
.apps { display: flex; margin-left: 2px; }
.app { width: 55px; height: 50px; position: relative; display: flex; align-items: center; justify-content: center; }
.run::after { content: ""; position: absolute; left: 24px; bottom: 0; width: 8px; height: 4px; border-radius: 2px; background: #91a190; }
.on { isolation: isolate; }
.on::before { content: ""; position: absolute; z-index: -1; left: 3px; top: 0; width: 50px; height: 50px; border-radius: 6px; background: #203521; border: 1px solid #314631; }
.on::after { left: 18px; width: 20px; background: #ff80b5; }
.badge { position: absolute; left: 20px; top: 4px; width: 34px; height: 20px; border-radius: 10px; background: #ff80b5; color: #111; font-size: 13px; line-height: 19px; text-align: center; }
.face { position: absolute; left: 29px; top: 4px; }
.tray { flex: 1; display: flex; align-items: center; font-size: 14.500px; line-height: 20px; letter-spacing: -0.150px; }
.chev { margin-left: 28px; }
.sync { margin-left: 22px; }
.lang { width: 32px; margin-left: 21px; text-align: center; }
.wifi { margin-left: 21px; }
.vol { margin-left: 10px; }
.bat { margin-left: 10px; }
.clock { width: 96px; text-align: right; letter-spacing: 0.050px; white-space: nowrap; }
.bell { margin-left: 11px; }
```
